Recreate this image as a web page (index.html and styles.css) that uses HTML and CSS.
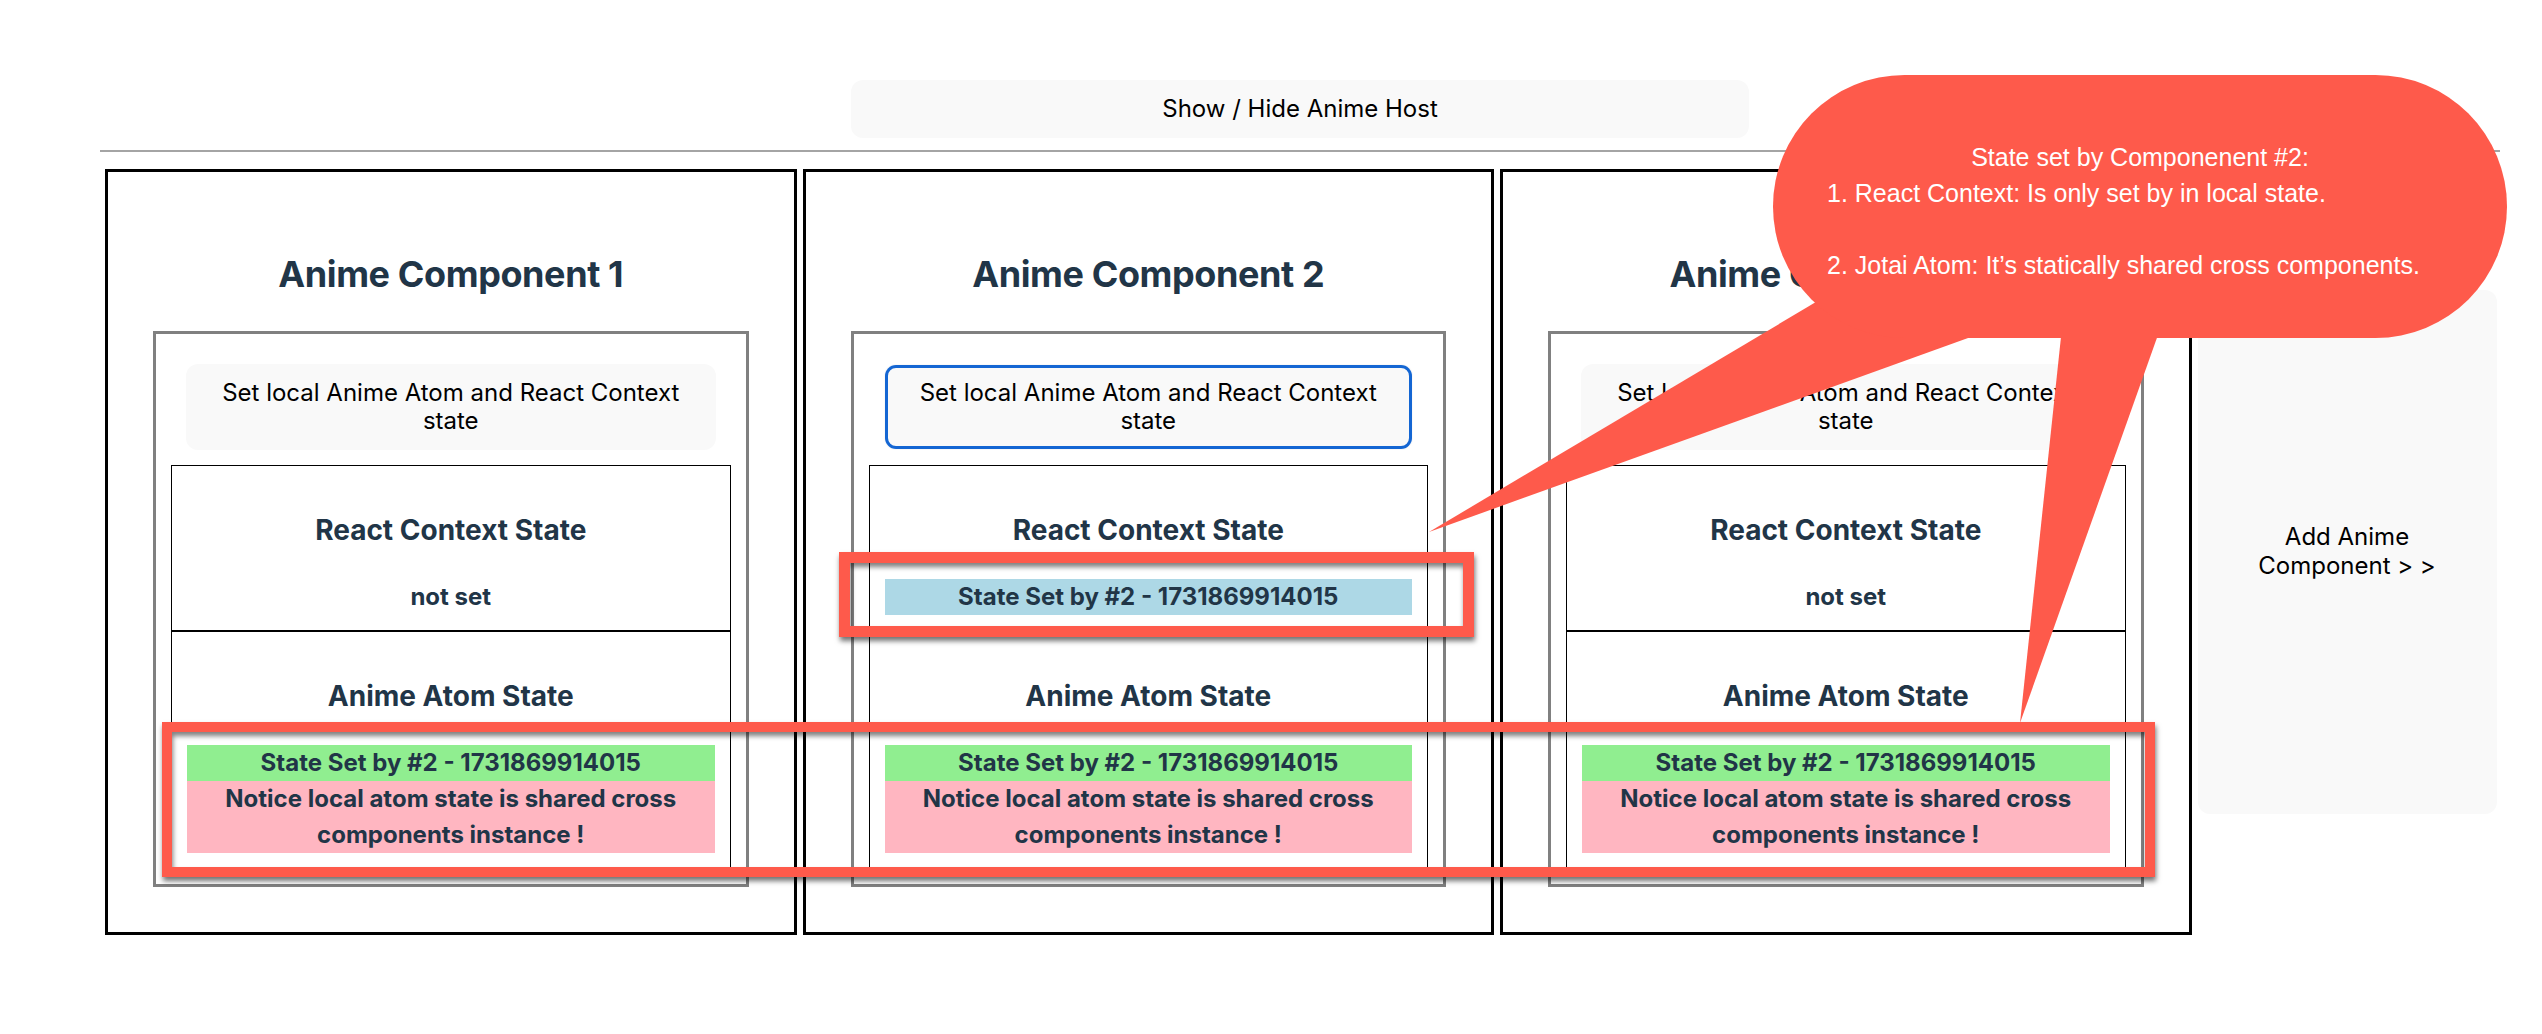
FILE: index.html
```html
<!DOCTYPE html>
<html lang="en">
<head>
<meta charset="utf-8">
<title>Anime Host</title>
<link rel="stylesheet" href="styles.css">
</head>
<body>
<main class="host">
  <div class="toolbar">
    <button class="btn btn-toggle">Show / Hide Anime Host</button>
  </div>
  <hr class="divider">
  <div class="row">
    <section class="card">
      <h2 class="card-title">Anime Component 1</h2>
      <div class="panel">
        <div class="btn-wrap"><button class="btn btn-set">Set local Anime Atom and React Context state</button></div>
        <div class="state">
          <h3 class="state-title">React Context State</h3>
          <div class="value">not set</div>
        </div>
        <div class="state">
          <h3 class="state-title">Anime Atom State</h3>
          <div class="value value-green">State Set by #2 - 1731869914015</div>
          <div class="value value-pink">Notice local atom state is shared cross components instance !</div>
        </div>
      </div>
    </section>
    <section class="card">
      <h2 class="card-title">Anime Component 2</h2>
      <div class="panel">
        <div class="btn-wrap"><button class="btn btn-set is-focused">Set local Anime Atom and React Context state</button></div>
        <div class="state">
          <h3 class="state-title">React Context State</h3>
          <div class="value value-blue">State Set by #2 - 1731869914015</div>
        </div>
        <div class="state">
          <h3 class="state-title">Anime Atom State</h3>
          <div class="value value-green">State Set by #2 - 1731869914015</div>
          <div class="value value-pink">Notice local atom state is shared cross components instance !</div>
        </div>
      </div>
    </section>
    <section class="card">
      <h2 class="card-title">Anime Component 3</h2>
      <div class="panel">
        <div class="btn-wrap"><button class="btn btn-set">Set local Anime Atom and React Context state</button></div>
        <div class="state">
          <h3 class="state-title">React Context State</h3>
          <div class="value">not set</div>
        </div>
        <div class="state">
          <h3 class="state-title">Anime Atom State</h3>
          <div class="value value-green">State Set by #2 - 1731869914015</div>
          <div class="value value-pink">Notice local atom state is shared cross components instance !</div>
        </div>
      </div>
    </section>
    <button class="btn btn-add">Add Anime Component &gt; &gt;</button>
  </div>
</main>

<div class="annotations">
  <svg class="tails" width="2542" height="1034" viewBox="0 0 2542 1034" xmlns="http://www.w3.org/2000/svg">
    <polygon points="1429,532 1890,258 2018,320" fill="#fe5a4b"/>
    <polygon points="2020,723 2063,318 2164,318" fill="#fe5a4b"/>
  </svg>
  <div class="bubble">
    <div class="bubble-title">State set by Componenent #2:</div>
    <div class="bubble-item">1. React Context: Is only set by in local state.</div>
    <div class="bubble-item bubble-item-gap">2. Jotai Atom: It’s statically shared cross components.</div>
  </div>
  <div class="mark mark-context"></div>
  <div class="mark mark-atom"></div>
</div>
</body>
</html>
```

FILE: styles.css
```css
* {
  box-sizing: border-box;
}

html, body {
  margin: 0;
  padding: 0;
  background: #ffffff;
}

body {
  position: relative;
  width: 2542px;
  height: 1034px;
  overflow: hidden;
  font-family: Inter, "Noto Sans", "DejaVu Sans", sans-serif;
  font-size: 24px;
  line-height: 1.5;
  color: #213547;
}

.host {
  width: 2400px;
  margin-left: 100px;
  padding-top: 80px;
}

.toolbar {
  display: flex;
  justify-content: center;
}

.btn {
  font-family: inherit;
  font-size: 24px;
  font-weight: 400;
  line-height: 1.15;
  color: #000000;
  background: #f9f9f9;
  border: 1px solid transparent;
  border-radius: 12px;
  padding: 14.4px 28.8px;
  cursor: pointer;
}

.btn-toggle {
  width: 898px;
  height: 58px;
}

.divider {
  margin: 12px 0 0 0;
  border: 0;
  border-top: 2px solid #a4a4a4;
  height: 0;
}

.row {
  margin-top: 17px;
  padding-left: 5px;
  display: flex;
  align-items: center;
  gap: 6px;
}

.card {
  flex: none;
  width: 691.5px;
  border: 3px solid #000000;
  padding: 45px;
  text-align: center;
}

.card-title {
  margin: 30px 0;
  font-size: 36px;
  line-height: 54px;
  font-weight: 700;
  letter-spacing: -0.4px;
}

.panel {
  border: 3px solid #808080;
  padding: 15px;
}

.btn-wrap {
  padding: 15px;
}

.btn-set {
  width: 100%;
  display: block;
}

.btn-set.is-focused {
  box-shadow: inset 0 0 0 3px #1466d3;
}

.state {
  border: 1px solid #000000;
  padding: 15px;
}

.state-title {
  margin: 28px 0;
  font-size: 28px;
  line-height: 42px;
  font-weight: 700;
}

.value {
  font-weight: 700;
  line-height: 36px;
}

.value-blue {
  background: #add8e6;
}

.value-green {
  background: #90ee90;
}

.value-pink {
  background: #ffb6c1;
}

.btn-add {
  flex: none;
  width: 299px;
  height: 524px;
  line-height: 1.2;
}

/* annotation overlay */
.annotations {
  position: absolute;
  left: 0;
  top: 0;
  width: 2542px;
  height: 1034px;
  pointer-events: none;
}

.tails {
  position: absolute;
  left: 0;
  top: 0;
}

.bubble {
  position: absolute;
  left: 1773px;
  top: 75px;
  width: 734px;
  height: 263px;
  border-radius: 132px;
  background: #fe5a4b;
  color: #ffffff;
  font-family: "Liberation Sans", Arial, sans-serif;
  font-size: 25px;
  line-height: 36px;
  padding-top: 64px;
}

.bubble-title {
  text-align: center;
}

.bubble-item {
  padding-left: 54px;
  white-space: nowrap;
}

.bubble-item-gap {
  margin-top: 36px;
}

.mark {
  position: absolute;
  border: 11px solid #fe5a4b;
  box-shadow: 1px 4px 5px rgba(0, 0, 0, 0.55), inset 1px 4px 5px rgba(0, 0, 0, 0.5);
}

.mark-context {
  left: 839px;
  top: 552px;
  width: 635px;
  height: 85px;
}

.mark-atom {
  left: 162px;
  top: 722px;
  width: 1993px;
  height: 155px;
  border-width: 10px;
}
```
